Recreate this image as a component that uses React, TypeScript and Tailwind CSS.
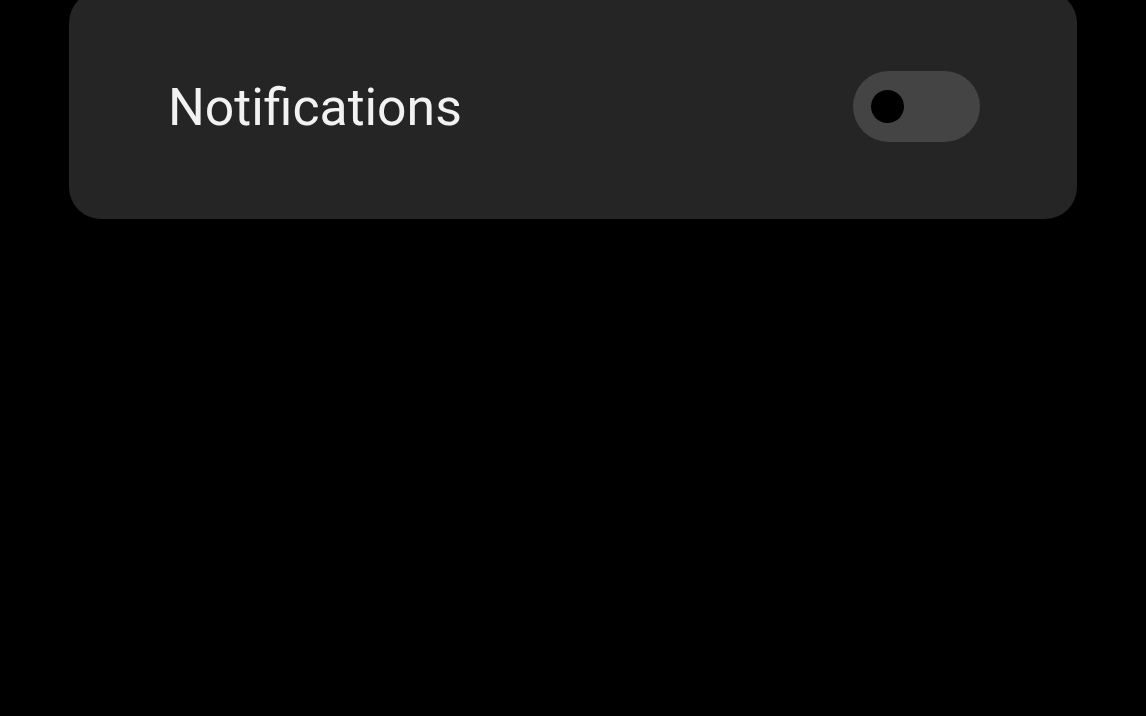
import React from 'react';

const Toggle: React.FC = () => {
  return (
    <div className="flex h-[71px] w-[127px] items-center rounded-full bg-[#444444] pl-[18px]">
      <div className="h-[33px] w-[33px] rounded-full bg-black" />
    </div>
  );
};

const App: React.FC = () => {
  return (
    <div className="h-[716px] w-full overflow-hidden bg-black px-[69px]" style={{ fontFamily: 'Roboto, "Liberation Sans", sans-serif' }}>
      <div className="-mt-[9px] flex h-[228px] items-center justify-between rounded-[32px] bg-[#252525] pl-[99px] pr-[97px]">
        <span className="mt-[5px] text-[51.7px] leading-none text-[#f2f2f2]">Notifications</span>
        <div className="mt-[2px]">
          <Toggle />
        </div>
      </div>
    </div>
  );
};

export default App;
